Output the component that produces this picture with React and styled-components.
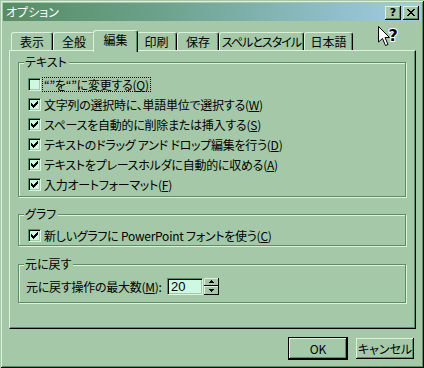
import React from 'react'
import styled, { createGlobalStyle } from 'styled-components';

const face = '#a4c8a8';
const hl = '#dcf2dc';
const shadow = '#5c8e66';
const field = '#cff8e2';

const GlobalStyle = createGlobalStyle`
  html, body {
    margin: 0;
    padding: 0;
    background: ${face};
  }
  * {
    box-sizing: border-box;
  }
`;

const tabs = [
  { label: '表示', width: 42 },
  { label: '全般', width: 42 },
  { label: '編集', width: 41, selected: true },
  { label: '印刷', width: 41 },
  { label: '保存', width: 42 },
  { label: 'スペルとスタイル', width: 85, spacing: -1 },
  { label: '日本語', width: 49 },
];

const textOptions = [
  { before: '“”を“”に変更する(', key: 'Q', checked: false, focused: true },
  { before: '文字列の選択時に、単語単位で選択する(', key: 'W', checked: true },
  { before: 'スペースを自動的に削除または挿入する(', key: 'S', checked: true },
  { before: 'テキストのドラッグ アンド ドロップ編集を行う(', key: 'D', checked: true },
  { before: 'テキストをプレースホルダに自動的に収める(', key: 'A', checked: true },
  { before: '入力オートフォーマット(', key: 'F', checked: true },
];

function CheckMark() {
  return (
    <svg width="7" height="7" viewBox="0 0 7 7" shapeRendering="crispEdges">
      <path
        fill="#000"
        d="M6 0h1v1h-1z M5 1h2v1h-2z M0 2h1v1h-1z M4 2h3v1h-3z M0 3h2v1h-2z M3 3h3v1h-3z M0 4h5v1h-5z M1 5h3v1h-3z M2 6h1v1h-1z"
      />
    </svg>
  );
}

function Option({ before, accessKey, checked, focused }) {
  return (
    <CheckRow>
      <CheckBox>{checked && <CheckMark />}</CheckBox>
      <Label $focused={focused}>
        {before}<u>{accessKey}</u>)
      </Label>
    </CheckRow>
  );
}

export default function App() {
  return (
    <>
      <GlobalStyle />
      <Window>
        <TitleBar>
          <Title>オプション</Title>
          <TitleButtons>
            <TitleButton><HelpGlyph>?</HelpGlyph></TitleButton>
            <TitleButton>
              <svg width="8" height="7" viewBox="0 0 8 7" shapeRendering="crispEdges">
                <path fill="#000" d="M0 0h2v1h-2z M6 0h2v1h-2z M1 1h2v1h-2z M5 1h2v1h-2z M2 2h4v1h-4z M3 3h2v1h-2z M2 4h4v1h-4z M1 5h2v1h-2z M5 5h2v1h-2z M0 6h2v1h-2z M6 6h2v1h-2z" />
              </svg>
            </TitleButton>
          </TitleButtons>
        </TitleBar>

        <HelpCursor width="24" height="22" viewBox="0 0 24 22">
          <path d="M0.5 0.5 L0.5 16 L4.5 12.5 L7.5 19.5 L10 18.5 L7 11.5 L11.5 11.5 Z" fill="#fff" stroke="#000" strokeWidth="1" />
          <text x="10.5" y="15" fontFamily="'DejaVu Sans', sans-serif" fontWeight="700" fontSize="16" fill="#000" stroke="#fff" strokeWidth="2" paintOrder="stroke">?</text>
        </HelpCursor>

        <Body>
          <TabRow>
            {tabs.map((t) => (
              <Tab key={t.label} $width={t.width} $selected={t.selected} $spacing={t.spacing || 0}>{t.label}</Tab>
            ))}
          </TabRow>

          <Panel>
            <Group $mt={4}>
              <Legend>テキスト</Legend>
              <GroupBody $pt={5} $pb={2} $pl={9}>
                {textOptions.map((o) => (
                  <Option key={o.key} before={o.before} accessKey={o.key} checked={o.checked} focused={o.focused} />
                ))}
              </GroupBody>
            </Group>

            <Group $mt={10}>
              <Legend>グラフ</Legend>
              <GroupBody $pt={4} $pb={0} $pl={9}>
                <CheckRow>
                  <CheckBox><CheckMark /></CheckBox>
                  <Label>新しいグラフに PowerPoint フォントを使う(<u>C</u>)</Label>
                </CheckRow>
              </GroupBody>
            </Group>

            <Group $mt={11}>
              <Legend>元に戻す</Legend>
              <GroupBody $pt={5} $pb={6} $pl={7}>
                <FieldRow>
                  <FieldLabel>元に戻す操作の最大数(<u>M</u>):</FieldLabel>
                  <NumField>20</NumField>
                  <Spinner>
                    <SpinHalf>
                      <svg width="5" height="3" viewBox="0 0 5 3" shapeRendering="crispEdges">
                        <path fill="#000" d="M2 0h1v1h-1z M1 1h3v1h-3z M0 2h5v1h-5z" />
                      </svg>
                    </SpinHalf>
                    <SpinHalf>
                      <svg width="5" height="3" viewBox="0 0 5 3" shapeRendering="crispEdges">
                        <path fill="#000" d="M0 0h5v1h-5z M1 1h3v1h-3z M2 2h1v1h-1z" />
                      </svg>
                    </SpinHalf>
                  </Spinner>
                </FieldRow>
              </GroupBody>
            </Group>
          </Panel>

          <ButtonRow>
            <PushButton $default>OK</PushButton>
            <PushButton>キャンセル</PushButton>
          </ButtonRow>
        </Body>
      </Window>
    </>
  );
}

const uiFont = `"Noto Sans CJK JP", "Liberation Sans", sans-serif`;

const Window = styled.div`
  position: relative;
  width: 424px;
  height: 368px;
  padding: 3px;
  background: ${face};
  box-shadow: inset 1px 1px ${face}, inset -1px -1px #000, inset 2px 2px ${hl}, inset -2px -2px ${shadow};
  display: flex;
  flex-direction: column;
  font-family: ${uiFont};
  font-feature-settings: "palt";
  font-size: 12px;
  color: #000;
`;

const TitleBar = styled.div`
  height: 18px;
  background: linear-gradient(to right, #578c64, #6aa088 35%, #a2cce6);
  display: flex;
  align-items: center;
  justify-content: space-between;
  padding: 0 2px 0 3px;
`;

const Title = styled.div`
  color: #fff;
  font-size: 12px;
  line-height: 18px;
`;

const TitleButtons = styled.div`
  display: flex;
  gap: 2px;
  padding-top: 1px;
`;

const TitleButton = styled.div`
  width: 16px;
  height: 14px;
  background: ${face};
  box-shadow: inset -1px -1px #000, inset 1px 1px ${hl}, inset -2px -2px ${shadow};
  display: flex;
  align-items: center;
  justify-content: center;
  padding-bottom: 1px;
`;

const HelpGlyph = styled.span`
  font-family: "DejaVu Sans", sans-serif;
  font-weight: 700;
  font-size: 11px;
  line-height: 11px;
`;

const HelpCursor = styled.svg`
  position: absolute;
  left: 378px;
  top: 26px;
`;

const Body = styled.div`
  flex: 1;
  display: flex;
  flex-direction: column;
  padding: 0 5px 0 6px;
`;

const TabRow = styled.div`
  margin-top: 9px;
  height: 20px;
  display: flex;
  align-items: flex-end;
  padding-left: 2px;
  position: relative;
  z-index: 1;
`;

const Tab = styled.div`
  width: ${(p) => (p.$selected ? p.$width + 4 : p.$width)}px;
  height: ${(p) => (p.$selected ? 22 : 18)}px;
  margin: ${(p) => (p.$selected ? '0 -2px -2px' : '0')};
  background: ${face};
  border-top: 1px solid ${hl};
  border-left: 1px solid ${hl};
  border-right: 1px solid #000;
  border-radius: 3px 3px 0 0;
  box-shadow: inset -1px 0 ${shadow};
  display: flex;
  align-items: center;
  justify-content: center;
  padding-bottom: ${(p) => (p.$selected ? 4 : 0)}px;
  font-size: 12px;
  letter-spacing: ${(p) => p.$spacing}px;
  white-space: nowrap;
  position: relative;
  z-index: ${(p) => (p.$selected ? 2 : 1)};
`;

const Panel = styled.div`
  height: 279px;
  border-top: 1px solid ${hl};
  border-left: 1px solid ${hl};
  border-right: 1px solid #000;
  border-bottom: 1px solid #000;
  box-shadow: inset -1px -1px ${shadow};
  padding: 0 8px 0 8px;
  display: flex;
  flex-direction: column;
`;

const Group = styled.fieldset`
  margin: ${(p) => p.$mt}px 1px 0 0;
  padding: 0;
  min-width: 0;
  border: 1px solid ${shadow};
  box-shadow: 1px 1px ${hl}, inset 1px 1px ${hl};
`;

const Legend = styled.legend`
  margin-left: 5px;
  padding: 0 2px 0 1px;
  background: ${face};
  font-size: 12px;
  line-height: 14px;
`;

const GroupBody = styled.div`
  padding: ${(p) => p.$pt}px 0 ${(p) => p.$pb}px ${(p) => p.$pl}px;
  display: flex;
  flex-direction: column;
`;

const CheckRow = styled.div`
  height: 20px;
  display: flex;
  align-items: center;
  gap: 2px;
`;

const CheckBox = styled.div`
  width: 13px;
  height: 13px;
  flex: none;
  background: ${field};
  border-top: 1px solid ${shadow};
  border-left: 1px solid ${shadow};
  border-bottom: 1px solid ${hl};
  border-right: 1px solid ${hl};
  box-shadow: inset 1px 1px #000, inset -1px -1px ${face};
  display: flex;
  align-items: center;
  justify-content: center;
`;

const Label = styled.span`
  font-size: 12px;
  line-height: 13px;
  padding: 0 1px;
  letter-spacing: -0.25px;
  outline: ${(p) => (p.$focused ? '1px dotted #000' : 'none')};
  white-space: nowrap;

  u {
    text-underline-offset: 1px;
  }
`;

const FieldRow = styled.div`
  height: 20px;
  display: flex;
  align-items: center;
`;

const FieldLabel = styled.span`
  width: 141px;
  font-size: 12px;
  letter-spacing: -0.25px;
  white-space: nowrap;
`;

const NumField = styled.div`
  width: 36px;
  height: 17px;
  background: ${field};
  border-top: 1px solid ${shadow};
  border-left: 1px solid ${shadow};
  border-bottom: 1px solid ${hl};
  border-right: 1px solid ${hl};
  box-shadow: inset 1px 1px #000, inset -1px -1px ${face};
  padding: 0 0 0 3px;
  font-family: "Liberation Sans", sans-serif;
  font-size: 13px;
  line-height: 15px;
`;

const Spinner = styled.div`
  width: 15px;
  height: 17px;
  margin-left: 1px;
  display: flex;
  flex-direction: column;
`;

const SpinHalf = styled.div`
  flex: 1;
  background: ${face};
  box-shadow: inset -1px -1px #000, inset 1px 1px ${hl};
  display: flex;
  align-items: center;
  justify-content: center;
`;

const ButtonRow = styled.div`
  margin-top: 8px;
  display: flex;
  justify-content: flex-end;
  align-items: center;
  gap: 8px;
  padding-right: 2px;
`;

const PushButton = styled.div`
  width: ${(p) => (p.$default ? 60 : 58)}px;
  height: ${(p) => (p.$default ? 23 : 21)}px;
  background: ${face};
  border: ${(p) => (p.$default ? '1px solid #000' : 'none')};
  box-shadow: inset -1px -1px #000, inset 1px 1px ${hl}, inset -2px -2px ${shadow};
  display: flex;
  align-items: center;
  justify-content: center;
  font-size: 12px;
`;
